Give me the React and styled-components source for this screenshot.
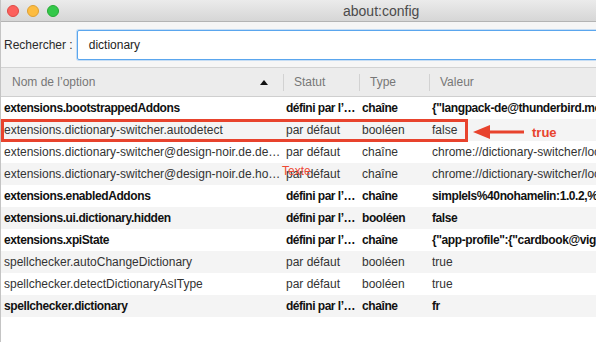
import React from 'react';
import styled, {createGlobalStyle} from 'styled-components';

const GlobalStyle = createGlobalStyle`
    html, body{
        margin:0;
        padding:0;
        background:#fff;
        font-family: "Liberation Sans", Arial, sans-serif;
        overflow:hidden;
    }
`

const USER = "défini par l’…"
const DEFAULT = "par défaut"

const rows = [
    {name:"extensions.bootstrappedAddons", status:USER, type:"chaîne", value:'{"langpack-de@thunderbird.mozilla.org":{"version":"52.0"}}', bold:true},
    {name:"extensions.dictionary-switcher.autodetect", status:DEFAULT, type:"booléen", value:"false"},
    {name:"extensions.dictionary-switcher@design-noir.de.description", status:DEFAULT, type:"chaîne", value:"chrome://dictionary-switcher/locale/dictionary-switcher.properties"},
    {name:"extensions.dictionary-switcher@design-noir.de.homepageURL", status:DEFAULT, type:"chaîne", value:"chrome://dictionary-switcher/locale/dictionary-switcher.properties"},
    {name:"extensions.enabledAddons", status:USER, type:"chaîne", value:"simpleIs%40nohamelin:1.0.2,%7B972ce4c6-7e08-4474-a285-3208198ce6fd%7D:52.0", bold:true},
    {name:"extensions.ui.dictionary.hidden", status:USER, type:"booléen", value:"false", bold:true},
    {name:"extensions.xpiState", status:USER, type:"chaîne", value:'{"app-profile":{"cardbook@vigneau.philippe":{"d":"/Users"}}}', bold:true},
    {name:"spellchecker.autoChangeDictionary", status:DEFAULT, type:"booléen", value:"true"},
    {name:"spellchecker.detectDictionaryAsIType", status:DEFAULT, type:"booléen", value:"true"},
    {name:"spellchecker.dictionary", status:USER, type:"chaîne", value:"fr", bold:true},
]

function App() {
    return (
        <>
        <GlobalStyle/>
        <Window>
            <TitleBar>
                <Light color="#fc605c" border="#de4a45"/>
                <Light color="#fdbc40" border="#dea033"/>
                <Light color="#34c84a" border="#27aa35"/>
                <Title>about:config</Title>
            </TitleBar>
            <Toolbar>
                <Label>Rechercher :</Label>
                <Search>dictionary</Search>
            </Toolbar>
            <Header>
                <HeadCell>
                    Nom de l’option
                    <SortArrow/>
                </HeadCell>
                <HeadCell divider>Statut</HeadCell>
                <HeadCell divider>Type</HeadCell>
                <HeadCell divider>Valeur</HeadCell>
            </Header>
            <Body>
                {
                    rows.map((row,i)=>(
                        <Row key={row.name} bold={row.bold} striped={i % 2 === 1}>
                            <NameCell>{row.name}</NameCell>
                            <StatusCell>{row.status}</StatusCell>
                            <Cell>{row.type}</Cell>
                            <ValueCell>{row.value}</ValueCell>
                        </Row>
                    ))
                }
                <Highlight/>
                <Arrow width="54" height="18" viewBox="0 0 54 18">
                    <line x1="52" y1="8" x2="14" y2="8" stroke="#e8432d" strokeWidth="3"/>
                    <polygon points="1,8 18,1 18,15" fill="#e8432d"/>
                </Arrow>
                <Note>true</Note>
                <Stray>Texte</Stray>
            </Body>
        </Window>
        </>
    );
}

const Window = styled.div`
    width:596px;
    height:342px;
    overflow:hidden;
    display:flex;
    flex-direction:column;
    border-left:1px solid #c4c4c4;
    box-sizing:border-box;
`
const TitleBar = styled.div`
    height:21px;
    flex-shrink:0;
    display:flex;
    align-items:center;
    padding-left:6px;
    gap:8px;
    background: linear-gradient(#ebebeb, #d6d6d6);
    border-bottom:1px solid #b4b4b4;
`
const Light = styled.span`
    width:12px;
    height:12px;
    border-radius:50%;
    background:${p=>p.color};
    box-sizing:border-box;
    border:0.5px solid ${p=>p.border};
`
const Title = styled.div`
    margin-left:276px;
    font-size:14px;
    color:#4b4b4b;
`
const Toolbar = styled.div`
    height:45px;
    flex-shrink:0;
    display:flex;
    align-items:center;
    background:#f6f6f6;
    padding-left:3px;
    gap:4px;
`
const Label = styled.div`
    font-size:12px;
    color:#2b2b2b;
    flex:0 0 67px;
    white-space:nowrap;
`
const Search = styled.div`
    flex:1;
    height:30px;
    margin-right:-20px;
    box-sizing:border-box;
    background:#fff;
    border:1px solid #5aa6ee;
    border-radius:2px;
    box-shadow:0 0 0 1px rgba(110,175,240,0.35);
    display:flex;
    align-items:center;
    padding-left:11px;
    font-size:12px;
    color:#1d1d1d;
`
const columns = `282px 76px 70px 1fr`

const Header = styled.div`
    height:28px;
    flex-shrink:0;
    display:grid;
    grid-template-columns:${columns};
    background:#ececec;
    border-top:1px solid #d3d3d3;
    border-bottom:1px solid #cfcfcf;
`
const HeadCell = styled.div`
    position:relative;
    display:flex;
    align-items:center;
    padding-left:11px;
    font-size:12px;
    color:#777;
    &::before{
        content:"";
        display:${p=>p.divider ? "block" : "none"};
        position:absolute;
        left:0;
        top:6px;
        bottom:5px;
        width:1px;
        background:#d2d2d2;
    }
`
const SortArrow = styled.span`
    position:absolute;
    left:259px;
    top:12px;
    width:0;
    height:0;
    border-left:4px solid transparent;
    border-right:4px solid transparent;
    border-bottom:5px solid #111;
`
const Body = styled.div`
    position:relative;
    flex:1;
    background:#fff;
`
const Row = styled.div`
    height:22px;
    display:grid;
    grid-template-columns:${columns};
    align-items:center;
    font-size:12px;
    background:${p=>p.striped ? "#f4f4f4" : "#fff"};
    color:${p=>p.bold ? "#111" : "#333"};
    font-weight:${p=>p.bold ? "bold" : "normal"};
    letter-spacing:${p=>p.bold ? "-0.4px" : "0"};
`
const Cell = styled.div`
    padding-left:3px;
    padding-right:3px;
    white-space:nowrap;
    overflow:hidden;
    text-overflow:ellipsis;
`
const NameCell = styled(Cell)`
    padding-right:2px;
`
const StatusCell = styled(Cell)`
    padding-right:0;
    text-overflow:clip;
    letter-spacing:${p=>p.children === USER ? "-0.5px" : "inherit"};
`
const ValueCell = styled(Cell)`
    text-overflow:clip;
    padding-right:0;
`
const Highlight = styled.div`
    position:absolute;
    left:0;
    top:22px;
    width:467px;
    height:23px;
    box-sizing:border-box;
    border:3px solid #e8432d;
`
const Arrow = styled.svg`
    position:absolute;
    left:471px;
    top:27px;
`
const Note = styled.div`
    position:absolute;
    left:531px;
    top:28px;
    font-size:13px;
    font-weight:bold;
    color:#e8432d;
`
const Stray = styled.div`
    position:absolute;
    left:281px;
    top:67px;
    font-size:12px;
    color:#ee4a35;
`

export default App;
